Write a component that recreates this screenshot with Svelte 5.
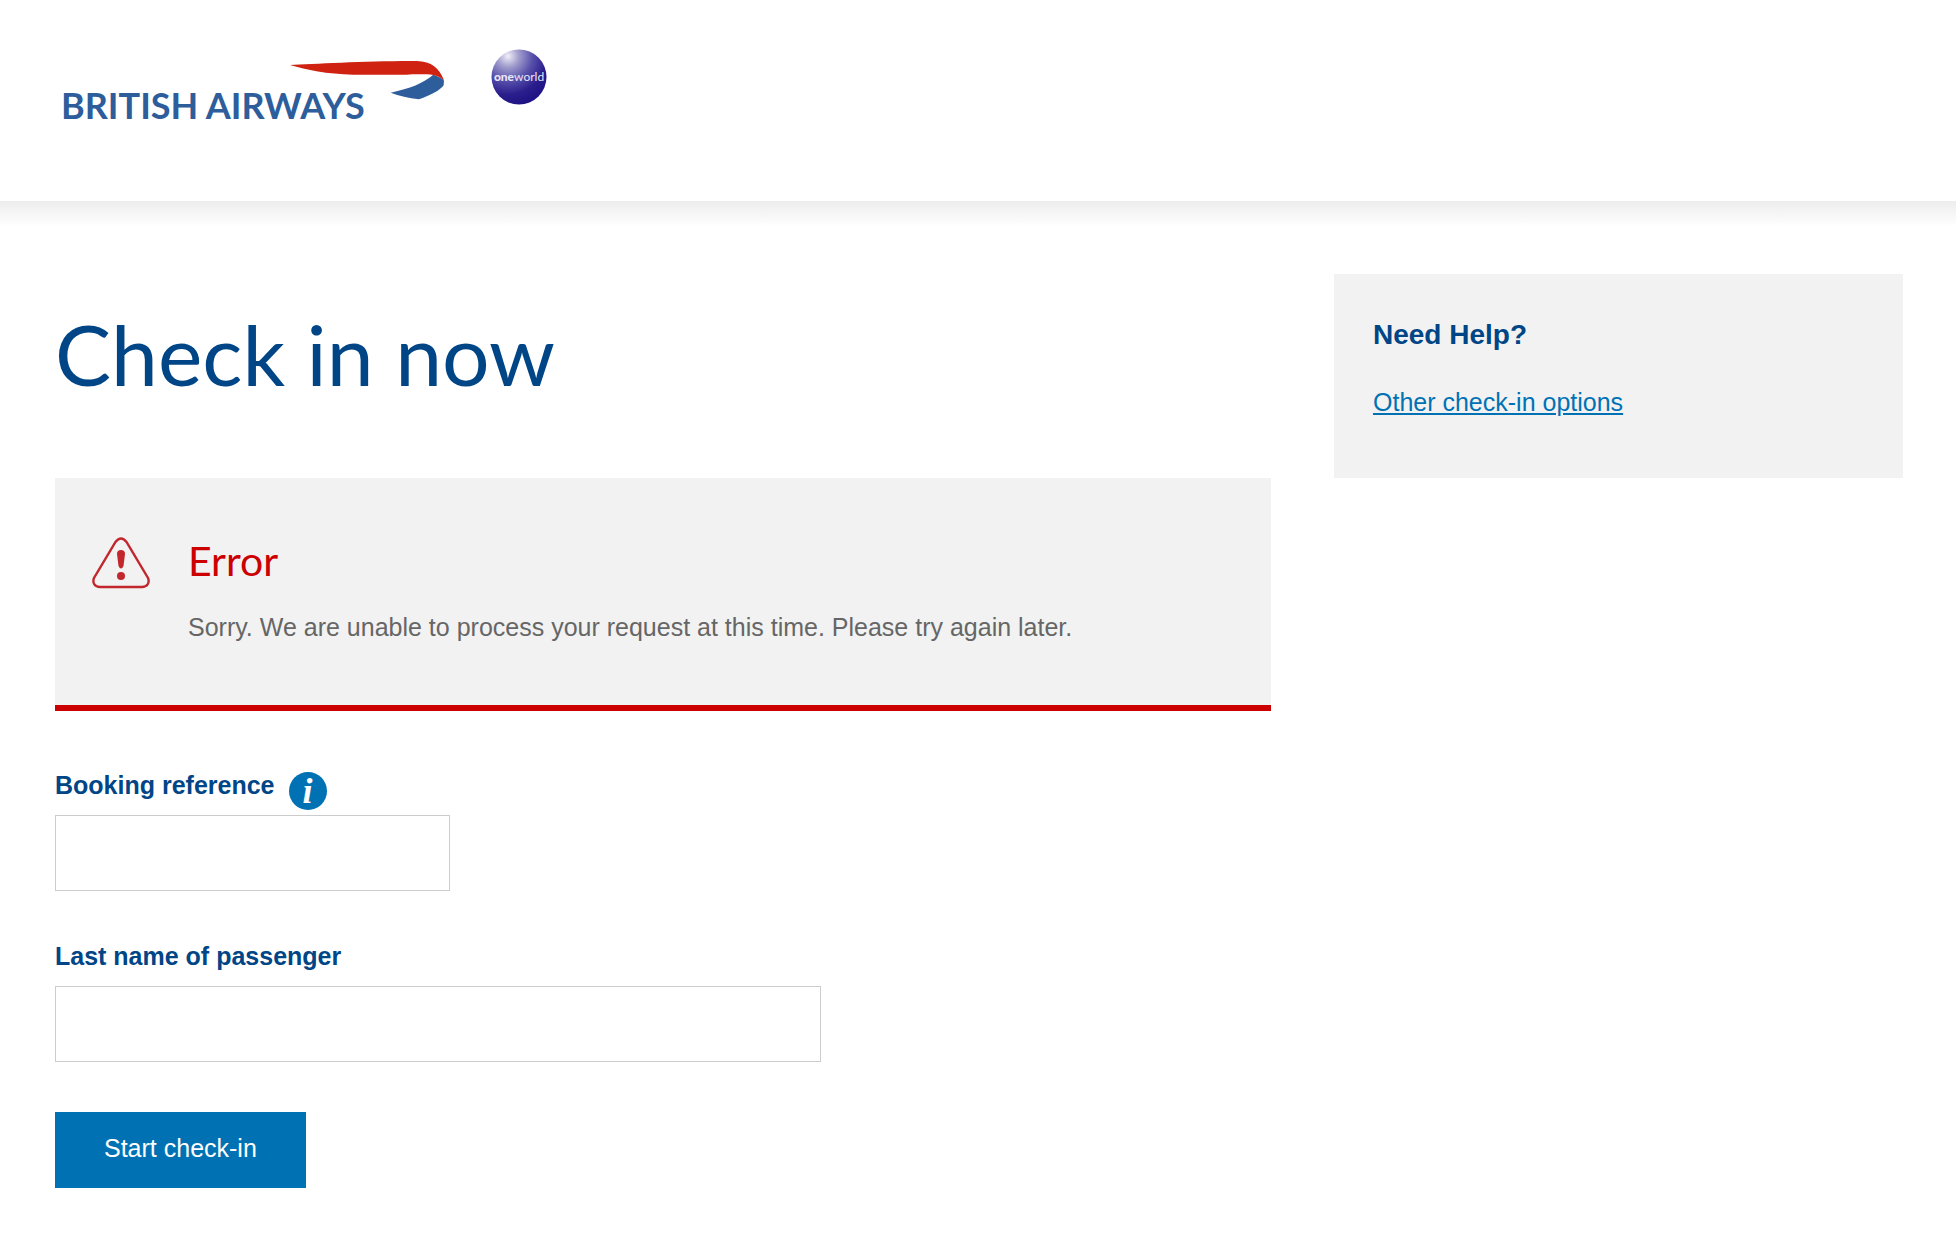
<script>
	let bookingReference = '';
	let lastName = '';
	let showHint = false;
	let error = 'Sorry. We are unable to process your request at this time. Please try again later.';

	function startCheckIn() {
		error = 'Sorry. We are unable to process your request at this time. Please try again later.';
	}
</script>

<header>
	<a class="logo" href="/" aria-label="British Airways">
		<svg width="384" height="80" viewBox="61 48 384 80" aria-hidden="true">
			<text class="wordmark" x="61" y="119">BRITISH AIRWAYS</text>
			<g transform="translate(270 40) scale(0.3333)">
				<path fill="#2d5e9b" d="M490 104C506 109 520 117 522 122L521 136C512 150 482 166 447 178C415 174 388 168 362 158C420 145 460 130 490 104Z" />
				<path fill="#cf2211" d="M60 75C130 72 300 62 440 63C485 64 508 85 522 121C512 112 500 107 490 105C466 102 430 103 410 104L250 104C170 102 110 90 60 75Z" />
			</g>
		</svg>
	</a>
	<a class="alliance" href="/oneworld" aria-label="oneworld">
		<svg width="58" height="58" viewBox="0 0 58 58" aria-hidden="true">
			<defs>
				<radialGradient id="globe" cx="0.3" cy="0.12" r="0.9">
					<stop offset="0" stop-color="#f0eff8" />
					<stop offset="0.22" stop-color="#a19dcd" />
					<stop offset="0.5" stop-color="#5750aa" />
					<stop offset="0.78" stop-color="#2a1d8c" />
					<stop offset="1" stop-color="#1f1284" />
				</radialGradient>
			</defs>
			<circle cx="29" cy="29" r="27.500" fill="url(#globe)" />
			<text class="globe-text" x="29" y="33" text-anchor="middle"><tspan font-weight="900">one</tspan>world</text>
		</svg>
	</a>
</header>

<main>
	<section class="content">
		<h1>Check in now</h1>

		{#if error}
			<div class="error" role="alert">
				<svg width="58" height="52" viewBox="0 0 58 52" fill="none" aria-hidden="true">
					<path stroke="#c1272d" stroke-width="2.4" d="M23.500 5Q29 -2 34.500 5L56 41C58 46 55 50 50 50H8C3 50 0 46 2 41Z" />
					<path fill="#c1272d" d="M25 17Q25 13 29 13Q33 13 33 17L31.500 29Q29 34 26.500 29Z" />
					<circle cx="29" cy="39" r="4" fill="#c1272d" />
				</svg>
				<div>
					<h2>Error</h2>
					<p>{error}</p>
				</div>
			</div>
		{/if}

		<form on:submit|preventDefault={startCheckIn}>
			<div class="field">
				<div class="label-row">
					<label for="booking">Booking reference</label>
					<button class="info" type="button" aria-label="About booking references" on:click={() => (showHint = !showHint)}>i</button>
				</div>
				<input id="booking" class="short" type="text" bind:value={bookingReference} />
				{#if showHint}
					<p class="hint">Your booking reference has six letters and numbers.</p>
				{/if}
			</div>
			<div class="field">
				<div class="label-row">
					<label for="lastname">Last name of passenger</label>
				</div>
				<input id="lastname" type="text" bind:value={lastName} />
			</div>
			<button class="submit" type="submit">Start check-in</button>
		</form>
	</section>

	<aside>
		<h3>Need Help?</h3>
		<a href="/check-in-options">Other check-in options</a>
	</aside>
</main>

<style>
	:global(body) {
		margin: 0;
		background: #fff;
		font-family: 'Liberation Sans', Arial, sans-serif;
		font-size: 25px;
		line-height: 32px;
		color: #666;
	}
	header {
		display: flex;
		align-items: flex-start;
		gap: 45px;
		padding: 48px 61px 73px;
	}
	header a,
	header svg {
		display: block;
	}
	.wordmark {
		font-family: Lato, sans-serif;
		font-size: 36px;
		font-weight: bold;
		fill: #2d5e9b;
	}
	.globe-text {
		font-family: Lato, sans-serif;
		font-size: 12px;
		fill: #e8e6f6;
	}
	main {
		display: grid;
		grid-template-columns: 1216fr 569fr;
		align-items: start;
		gap: 63px;
		padding: 73px 53px 50px 55px;
		background: linear-gradient(#ededed, #fff 26px);
	}
	h1,
	h2 {
		font-family: Lato, 'Open Sans', sans-serif;
		font-weight: normal;
	}
	h1 {
		margin: 26px 0 70px;
		font-size: 84px;
		line-height: 108px;
		color: #004586;
	}
	.error {
		display: flex;
		gap: 38px;
		padding: 59px 37px 62px;
		border-bottom: 6px solid #c00;
		background: #f2f2f2;
	}
	.error svg {
		flex: none;
	}
	h2 {
		margin: 0 0 26px;
		font-size: 41px;
		line-height: 48px;
		color: #c00;
	}
	p {
		margin: 0;
	}
	form {
		margin-top: 56px;
	}
	.field {
		margin-bottom: 47px;
	}
	.label-row {
		display: flex;
		align-items: flex-start;
		gap: 14px;
		height: 48px;
	}
	label {
		padding-top: 2px;
		font-weight: bold;
		color: #004586;
	}
	.info {
		width: 38px;
		height: 38px;
		margin-top: 5px;
		padding: 0;
		border: 0;
		border-radius: 50%;
		background: #0072b4;
		color: #fff;
		font: italic bold 36px/36px 'Liberation Serif', serif;
		cursor: pointer;
	}
	input {
		display: block;
		box-sizing: border-box;
		width: 63%;
		height: 76px;
		padding: 0 20px;
		border: 1px solid #ccc;
		font: inherit;
		color: #666;
	}
	input.short {
		max-width: 395px;
	}
	.hint {
		margin-top: 10px;
	}
	.submit {
		margin-top: 3px;
		padding: 20px 49px 24px;
		border: 0;
		background: #0072b4;
		color: #fff;
		font: inherit;
		cursor: pointer;
	}
	aside {
		padding: 43px 39px 60px;
		background: #f2f2f2;
	}
	h3 {
		margin: 0 0 33px;
		font-size: 28px;
		line-height: 36px;
		color: #004586;
	}
	aside a {
		color: #0072b4;
	}
</style>
